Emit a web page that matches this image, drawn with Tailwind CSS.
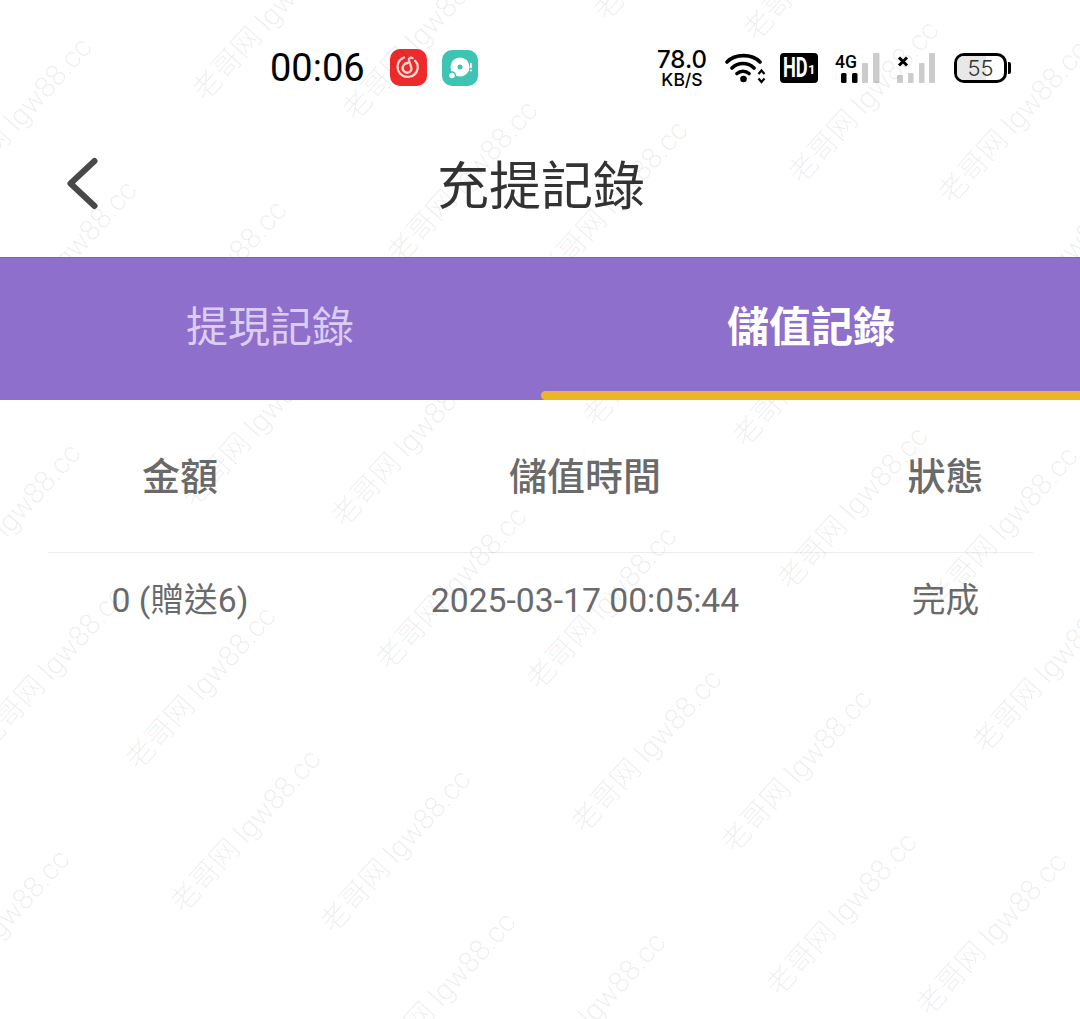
<!DOCTYPE html>
<html lang="zh-Hant">
<head>
<meta charset="utf-8">
<script src="https://cdn.jsdelivr.net/npm/@tailwindcss/browser@4"></script>
<title>充提記錄</title>
</head>
<body class="bg-white">
<div class="relative w-[1080px] h-[1019px] overflow-hidden bg-white font-['Roboto','Noto_Sans_CJK_TC',sans-serif]">

  <div class="flex items-center h-[135px] pl-[270px]">
    <span class="w-[93px] text-[38px] leading-none text-black font-['Roboto',sans-serif] font-normal">00:06</span>
    <svg class="ml-[27px]" width="37" height="37" viewBox="0 0 37 37"><rect width="37" height="37" rx="10" fill="#ee2a2a"/><path d="M14 8.500C8.500 10.500 6.500 16 8 21c1.700 5 7 8 12.500 6.500 5.500-1.500 8.500-7 7-12-.5-1.500-1.300-2.700-2.400-3.700" fill="none" stroke="#ffd9d5" stroke-width="2.300" stroke-linecap="round"/><path d="M17.500 14c-3.500.5-5.300 3.300-4.800 6 .5 2.700 3.300 4.300 5.800 3.500 2.500-.8 3.500-3.300 2.600-5.500L19 11.500c-.6-2 1-3.500 3.500-2.500" fill="none" stroke="#ffd9d5" stroke-width="2.300" stroke-linecap="round"/></svg>
    <svg class="ml-[15px]" width="36" height="36" viewBox="0 0 36 36"><rect width="36" height="36" rx="10" fill="#3dc4b2"/><circle cx="18" cy="17" r="9.500" fill="#fff"/><circle cx="18" cy="17" r="2.500" fill="#3dc4b2"/><circle cx="10" cy="25.500" r="3.500" fill="#fff" stroke="#3dc4b2" stroke-width="1.500"/><rect x="28" y="13" width="1.800" height="5" fill="#fff"/><rect x="28" y="19.500" width="1.800" height="1.800" fill="#fff"/></svg>
    <div class="ml-[179px] w-[50px] flex flex-col items-center text-black font-['Inter',sans-serif]">
      <span class="text-[24px] leading-[24px] font-medium whitespace-nowrap">78.0</span>
      <span class="text-[17.5px] leading-[16px] font-medium whitespace-nowrap">KB/S</span>
    </div>
    <svg class="ml-[18px]" width="42" height="34" viewBox="0 0 42 34"><path d="M2 11C10 2.500 27 2.500 35 11M7 17C13 11 23 11 29 17M12 22.500c3.500-3 8.500-3 12 0" fill="none" stroke="#000" stroke-width="3.600" stroke-linecap="round"/><circle cx="18.500" cy="28" r="3.300" fill="#000"/><path d="M33.500 23l3-3.500 3 3.500M33.500 27.500l3 3.500 3-3.500" fill="none" stroke="#000" stroke-width="2.200"/></svg>
    <div class="ml-[13px] w-[38px] h-[30px] rounded-[4px] bg-black text-white flex items-center pl-[3px] font-['Roboto',sans-serif] font-bold">
      <span class="inline-block w-[25px] origin-left scale-x-[0.65] text-[28px] leading-[30px]">HD</span><span class="text-[13px] leading-[30px] pt-[4px]">1</span>
    </div>
    <svg class="ml-[17px]" width="104" height="34" viewBox="0 0 104 34">
      <text x="0" y="17" font-family="Roboto" font-weight="500" font-size="19" fill="#000" textLength="22" lengthAdjust="spacingAndGlyphs">4G</text>
      <rect x="6" y="22" width="5.500" height="10" rx="1.500" fill="#000"/><rect x="17" y="22" width="5.500" height="10" rx="1.500" fill="#000"/><rect x="27" y="12" width="6" height="20" rx="1" fill="#ccc"/><rect x="38" y="2" width="6.500" height="30" rx="1" fill="#ccc"/>
      <path d="M64 6.500l8 8M72 6.500L64 14.500" stroke="#000" stroke-width="3"/>
      <rect x="62" y="24" width="6" height="8" rx="1" fill="#ccc"/><rect x="73" y="22" width="5.500" height="10" rx="1" fill="#ccc"/><rect x="84" y="12" width="5.500" height="20" rx="1" fill="#ccc"/><rect x="94" y="2" width="6" height="30" rx="1" fill="#ccc"/>
    </svg>
    <div class="ml-[15px] flex items-center">
      <div class="relative w-[53px] h-[30px] rounded-[10px] border-[3px] border-black overflow-hidden flex items-center justify-center">
        <div class="absolute inset-y-0 left-0 w-[29px] bg-[#e8e8e8]"></div>
        <span class="relative text-[22px] leading-none text-[#333] font-['Inter',sans-serif] font-light">55</span>
      </div>
      <div class="ml-[1px] w-[3px] h-[12px] rounded-r-[2px] bg-black"></div>
    </div>
  </div>

  <header class="relative h-[122px] flex items-center justify-center">
    <svg class="absolute left-[66px] top-[21px]" width="34" height="56" viewBox="0 0 34 56"><path d="M28.500 5L4.500 27.500 28.500 50" fill="none" stroke="#484848" stroke-width="6" stroke-linecap="round" stroke-linejoin="round"/></svg>
    <h1 class="ml-[2px] mb-[17px] text-[52px] leading-none font-normal text-[#333]">充提記錄</h1>
  </header>

  <nav class="relative z-10 flex h-[143px] bg-[#8867c8]/95 border-t border-[#7a689f]">
    <div class="w-[541px] flex items-center justify-center text-[42px] leading-none text-[#dccdf5]"><span class="pr-[1px] pb-[3px]">提現記錄</span></div>
    <div class="relative flex-1 flex items-center justify-center text-[42px] leading-none font-bold text-white"><span class="pb-[3px] ml-[1px]">儲值記錄</span>
      <div class="absolute left-0 right-0 bottom-0 h-[9px] rounded-l-[5px] bg-[#ebb42a]"></div>
    </div>
  </nav>

  <div class="mx-[48px] grid grid-cols-[264px_546px_175px] text-center text-[#6a6a6a]">
    <div class="h-[153px] flex items-center justify-center border-b border-[#eeeeee] text-[38px] leading-none font-medium"><span class="pt-[2px]">金額</span></div>
    <div class="h-[153px] flex items-center justify-center border-b border-[#eeeeee] text-[38px] leading-none font-medium"><span class="pt-[2px]">儲值時間</span></div>
    <div class="h-[153px] flex items-center justify-center border-b border-[#eeeeee] text-[38px] leading-none font-medium"><span class="pt-[2px]">狀態</span></div>
    <div class="h-[96px] flex items-center justify-center text-[33.700px] leading-none">0 (贈送6)</div>
    <div class="h-[96px] flex items-center justify-center text-[33.700px] leading-none">2025-03-17 00:05:44</div>
    <div class="h-[96px] flex items-center justify-center text-[33.700px] leading-none">完成</div>
  </div>

  <div class="absolute inset-0 translate-x-[14px] translate-y-[10px] pointer-events-none text-[29px] leading-[29px] font-light text-black/[0.07] whitespace-nowrap">
    <span class="absolute origin-bottom-left -rotate-[48deg] left-[-22px] top-[716px]">老哥网 lgw88.cc</span>
    <span class="absolute origin-bottom-left -rotate-[48deg] left-[128px] top-[736px]">老哥网 lgw88.cc</span>
    <span class="absolute origin-bottom-left -rotate-[48deg] left-[379px] top-[636px]">老哥网 lgw88.cc</span>
    <span class="absolute origin-bottom-left -rotate-[48deg] left-[529px] top-[656px]">老哥网 lgw88.cc</span>
    <span class="absolute origin-bottom-left -rotate-[48deg] left-[780px] top-[556px]">老哥网 lgw88.cc</span>
    <span class="absolute origin-bottom-left -rotate-[48deg] left-[930px] top-[576px]">老哥网 lgw88.cc</span>
    <span class="absolute origin-bottom-left -rotate-[48deg] left-[173px] top-[879px]">老哥网 lgw88.cc</span>
    <span class="absolute origin-bottom-left -rotate-[48deg] left-[323px] top-[899px]">老哥网 lgw88.cc</span>
    <span class="absolute origin-bottom-left -rotate-[48deg] left-[574px] top-[799px]">老哥网 lgw88.cc</span>
    <span class="absolute origin-bottom-left -rotate-[48deg] left-[724px] top-[819px]">老哥网 lgw88.cc</span>
    <span class="absolute origin-bottom-left -rotate-[48deg] left-[975px] top-[719px]">老哥网 lgw88.cc</span>
    <span class="absolute origin-bottom-left -rotate-[48deg] left-[-228px] top-[959px]">老哥网 lgw88.cc</span>
    <span class="absolute origin-bottom-left -rotate-[48deg] left-[-78px] top-[979px]">老哥网 lgw88.cc</span>
    <span class="absolute origin-bottom-left -rotate-[48deg] left-[368px] top-[1042px]">老哥网 lgw88.cc</span>
    <span class="absolute origin-bottom-left -rotate-[48deg] left-[518px] top-[1062px]">老哥网 lgw88.cc</span>
    <span class="absolute origin-bottom-left -rotate-[48deg] left-[769px] top-[962px]">老哥网 lgw88.cc</span>
    <span class="absolute origin-bottom-left -rotate-[48deg] left-[919px] top-[982px]">老哥网 lgw88.cc</span>
    <span class="absolute origin-bottom-left -rotate-[48deg] left-[-217px] top-[553px]">老哥网 lgw88.cc</span>
    <span class="absolute origin-bottom-left -rotate-[48deg] left-[-67px] top-[573px]">老哥网 lgw88.cc</span>
    <span class="absolute origin-bottom-left -rotate-[48deg] left-[184px] top-[473px]">老哥网 lgw88.cc</span>
    <span class="absolute origin-bottom-left -rotate-[48deg] left-[334px] top-[493px]">老哥网 lgw88.cc</span>
    <span class="absolute origin-bottom-left -rotate-[48deg] left-[585px] top-[393px]">老哥网 lgw88.cc</span>
    <span class="absolute origin-bottom-left -rotate-[48deg] left-[735px] top-[413px]">老哥网 lgw88.cc</span>
    <span class="absolute origin-bottom-left -rotate-[48deg] left-[986px] top-[313px]">老哥网 lgw88.cc</span>
    <span class="absolute origin-bottom-left -rotate-[48deg] left-[-11px] top-[310px]">老哥网 lgw88.cc</span>
    <span class="absolute origin-bottom-left -rotate-[48deg] left-[139px] top-[330px]">老哥网 lgw88.cc</span>
    <span class="absolute origin-bottom-left -rotate-[48deg] left-[390px] top-[230px]">老哥网 lgw88.cc</span>
    <span class="absolute origin-bottom-left -rotate-[48deg] left-[540px] top-[250px]">老哥网 lgw88.cc</span>
    <span class="absolute origin-bottom-left -rotate-[48deg] left-[791px] top-[150px]">老哥网 lgw88.cc</span>
    <span class="absolute origin-bottom-left -rotate-[48deg] left-[941px] top-[170px]">老哥网 lgw88.cc</span>
    <span class="absolute origin-bottom-left -rotate-[48deg] left-[-206px] top-[147px]">老哥网 lgw88.cc</span>
    <span class="absolute origin-bottom-left -rotate-[48deg] left-[-56px] top-[167px]">老哥网 lgw88.cc</span>
    <span class="absolute origin-bottom-left -rotate-[48deg] left-[195px] top-[67px]">老哥网 lgw88.cc</span>
    <span class="absolute origin-bottom-left -rotate-[48deg] left-[345px] top-[87px]">老哥网 lgw88.cc</span>
    <span class="absolute origin-bottom-left -rotate-[48deg] left-[596px] top-[-13px]">老哥网 lgw88.cc</span>
    <span class="absolute origin-bottom-left -rotate-[48deg] left-[746px] top-[7px]">老哥网 lgw88.cc</span>
  </div>
</div>
</body>
</html>
